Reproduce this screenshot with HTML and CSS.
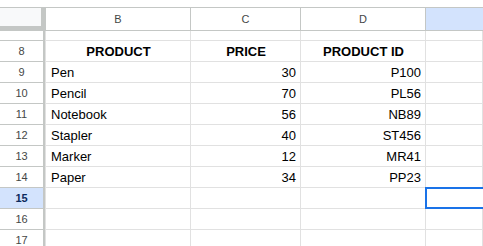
FILE: index.html
```html
<!DOCTYPE html>
<html lang="en">
<head>
    <meta charset="UTF-8">
    <title>Products sheet</title>
    <link rel="stylesheet" href="styles.css">
</head>
<body>

<div class="sheet">
    <div class="row head">
        <div class="corner"></div>
        <div class="col first">B</div>
        <div class="col">C</div>
        <div class="col">D</div>
        <div class="col active"></div>
    </div>

    <div class="row part">
        <div class="num"><span>7</span></div>
        <div class="cell first"></div>
        <div class="cell"></div>
        <div class="cell"></div>
        <div class="cell"></div>
    </div>

    <div class="row">
        <div class="num">8</div>
        <div class="cell first title">PRODUCT</div>
        <div class="cell title">PRICE</div>
        <div class="cell title">PRODUCT ID</div>
        <div class="cell"></div>
    </div>
    <div class="row">
        <div class="num">9</div>
        <div class="cell first">Pen</div>
        <div class="cell right">30</div>
        <div class="cell right">P100</div>
        <div class="cell"></div>
    </div>
    <div class="row">
        <div class="num">10</div>
        <div class="cell first">Pencil</div>
        <div class="cell right">70</div>
        <div class="cell right">PL56</div>
        <div class="cell"></div>
    </div>
    <div class="row">
        <div class="num">11</div>
        <div class="cell first">Notebook</div>
        <div class="cell right">56</div>
        <div class="cell right">NB89</div>
        <div class="cell"></div>
    </div>
    <div class="row">
        <div class="num">12</div>
        <div class="cell first">Stapler</div>
        <div class="cell right">40</div>
        <div class="cell right">ST456</div>
        <div class="cell"></div>
    </div>
    <div class="row">
        <div class="num">13</div>
        <div class="cell first">Marker</div>
        <div class="cell right">12</div>
        <div class="cell right">MR41</div>
        <div class="cell"></div>
    </div>
    <div class="row">
        <div class="num">14</div>
        <div class="cell first">Paper</div>
        <div class="cell right">34</div>
        <div class="cell right">PP23</div>
        <div class="cell"></div>
    </div>
    <div class="row">
        <div class="num active">15</div>
        <div class="cell first"></div>
        <div class="cell"></div>
        <div class="cell"></div>
        <div class="cell selected"></div>
    </div>
    <div class="row">
        <div class="num">16</div>
        <div class="cell first"></div>
        <div class="cell"></div>
        <div class="cell"></div>
        <div class="cell"></div>
    </div>
    <div class="row">
        <div class="num">17</div>
        <div class="cell first"></div>
        <div class="cell"></div>
        <div class="cell"></div>
        <div class="cell"></div>
    </div>
</div>

</body>
</html>
```

FILE: styles.css
```css
body {
    margin: 0;
    background: #ffffff;
    font-family: "Liberation Sans", Arial, sans-serif;
    overflow: hidden;
}

.sheet {
    margin-top: 7px;
}

.row {
    display: grid;
    grid-template-columns: 45px 146px 110px 125px 1fr;
    height: 21px;
}

.row > div {
    box-sizing: border-box;
}

/* column headers */
.head {
    height: 24px;
}

.corner {
    background: #f8f9fa;
    border-top: 1px solid #c4c7c5;
    border-right: 4px solid #c4c7c5;
    border-bottom: 5px solid #c4c7c5;
}

.col {
    display: flex;
    align-items: center;
    justify-content: center;
    font-size: 11px;
    color: #444746;
    border-top: 1px solid #c4c7c5;
    border-right: 1px solid #c4c7c5;
    border-bottom: 1px solid #c4c7c5;
}

.col.first {
    border-left: 1px solid #c4c7c5;
}

.col.active {
    background: #d3e3fd;
    border-right: none;
}

/* row numbers */
.num {
    display: flex;
    align-items: center;
    justify-content: center;
    font-size: 11px;
    color: #444746;
    border-right: 2px solid #c4c7c5;
    border-bottom: 1px solid #c4c7c5;
}

.num.active {
    background: #d3e3fd;
    color: #0b2a5c;
    font-weight: bold;
}

.part {
    height: 10px;
    overflow: hidden;
}

.part .num {
    align-items: flex-start;
    overflow: hidden;
}

.part .num span {
    margin-top: -11px;
}

/* cells */
.cell {
    display: flex;
    align-items: flex-end;
    padding: 0 4px 2px 5px;
    font-size: 13px;
    color: #000000;
    white-space: nowrap;
    border-right: 1px solid #e1e1e1;
    border-bottom: 1px solid #e1e1e1;
}

.cell.first {
    border-left: 1px solid #e1e1e1;
}

.title {
    justify-content: center;
    font-weight: bold;
}

.right {
    justify-content: flex-end;
}

.selected {
    position: relative;
    border-right: none;
}

.selected::after {
    content: "";
    position: absolute;
    top: -1px;
    left: -1px;
    right: -2px;
    bottom: -1px;
    border: 2px solid #1a73e8;
}
```
